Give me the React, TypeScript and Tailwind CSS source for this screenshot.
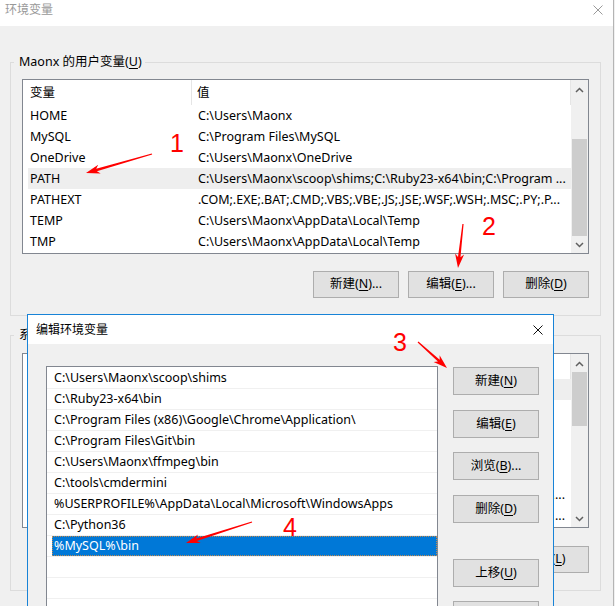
import React from "react";

const ff = "font-['Noto_Sans','Noto_Sans_CJK_SC',sans-serif]";

function Chevron({ up }: { up?: boolean }) {
  return (
    <svg width="9" height="6" viewBox="0 0 9 6">
      <polyline
        points={up ? "1,5 4.5,1.5 8,5" : "1,1 4.5,4.5 8,1"}
        fill="none"
        stroke="#606060"
        strokeWidth="1.5"
      />
    </svg>
  );
}

function ScrollBar({ trackClass, thumbClass }: { trackClass: string; thumbClass: string }) {
  return (
    <div className="w-[17px] h-full bg-[#f0f0f0] flex flex-col shrink-0">
      <div className="h-[17px] flex items-center justify-center pt-[2px]">
        <Chevron up />
      </div>
      <div className={`flex-1 flex flex-col px-[1px] ${trackClass}`}>
        <div className={`w-full bg-[#cdcdcd] ${thumbClass}`} />
      </div>
      <div className="h-[17px] flex items-center justify-center">
        <Chevron />
      </div>
    </div>
  );
}

function Button({ t, k, s = "", cls = "" }: { t: string; k: string; s?: string; cls?: string }) {
  return (
    <div
      className={`w-[86px] flex items-center justify-center bg-[#e1e1e1] border border-[#adadad] text-[12.5px] text-black leading-none ${cls}`}
    >
      <span>
        {t}(<span className="underline underline-offset-[2px]">{k}</span>){s}
      </span>
    </div>
  );
}

type Row = { n: string; v: string };

const userRows: Row[] = [
  { n: "HOME", v: "C:\\Users\\Maonx" },
  { n: "MySQL", v: "C:\\Program Files\\MySQL" },
  { n: "OneDrive", v: "C:\\Users\\Maonx\\OneDrive" },
  { n: "PATH", v: "C:\\Users\\Maonx\\scoop\\shims;C:\\Ruby23-x64\\bin;C:\\Program ..." },
  { n: "PATHEXT", v: ".COM;.EXE;.BAT;.CMD;.VBS;.VBE;.JS;.JSE;.WSF;.WSH;.MSC;.PY;.P..." },
  { n: "TEMP", v: "C:\\Users\\Maonx\\AppData\\Local\\Temp" },
  { n: "TMP", v: "C:\\Users\\Maonx\\AppData\\Local\\Temp" },
];

const sysRows: Row[] = [
  { n: "ComSpec", v: "C:\\WINDOWS\\system32\\cmd.exe" },
  { n: "DriverData", v: "C:\\Windows\\System32\\Drivers\\DriverData" },
  { n: "NUMBER_OF_PROCESSORS", v: "4" },
  { n: "OS", v: "Windows_NT" },
  { n: "ProgramData", v: "C:\\ProgramData" },
  { n: "Path", v: "C:\\ProgramData\\Oracle\\Java\\javapath;C:\\WINDOWS\\system32;C:\\..." },
  { n: "PATHEXT", v: ".COM;.EXE;.BAT;.CMD;.VBS;.VBE;.JS;.JSE;.WSF;.WSH;.MSC;.PY..." },
];

function VarList({
  rows,
  hi,
  trackClass,
  thumbClass,
  longEnd,
}: {
  rows: Row[];
  hi: number;
  trackClass: string;
  thumbClass: string;
  longEnd?: boolean;
}) {
  return (
    <div className="w-full h-[175px] border border-[#828790] bg-white flex">
      <div className="flex-1 flex flex-col min-w-0">
        <div className="h-[25px] flex items-center text-[12.5px] shrink-0">
          <div className="w-[169px] h-full flex items-center pl-[7px] pt-[1px] border-r border-[#e5e5e5]">变量</div>
          <div className="flex-1 h-full flex items-center pl-[5px] pt-[1px] border-r border-[#e5e5e5]">值</div>
        </div>
        <div className="pl-[5px] flex flex-col">
          {rows.map((r, i) => (
            <div
              key={r.n}
              className={`h-[21px] flex items-center pt-[2px] text-[12.5px] whitespace-nowrap ${
                i === hi ? "bg-[#eeeeee]" : ""
              }`}
            >
              <div className="w-[170px] pl-[2px] shrink-0 overflow-hidden">{r.n}</div>
              {longEnd && r.v.endsWith("...") ? (
                <div className="flex-1 flex min-w-0 pr-[6px]">
                  <span className="flex-1 overflow-hidden">{r.v.slice(0, -3)}</span>
                  <span>...</span>
                </div>
              ) : (
                <div className="flex-1 overflow-hidden">{r.v}</div>
              )}
            </div>
          ))}
        </div>
      </div>
      <ScrollBar trackClass={trackClass} thumbClass={thumbClass} />
    </div>
  );
}

function Group({
  label,
  k,
  cls,
  children,
}: {
  label: string;
  k: string;
  cls: string;
  children: React.ReactNode;
}) {
  return (
    <div className={`border border-[#dcdcdc] px-[11px] pb-[17px] ${cls}`}>
      <div className="block w-fit -mt-[9px] -ml-[8px] pl-[5px] pr-[3px] bg-[#f0f0f0] leading-[16px] text-[12.5px]">
        {label}(<span className="underline underline-offset-[2px]">{k}</span>)
      </div>
      {children}
    </div>
  );
}

function arrowPts(x1: number, y1: number, x2: number, y2: number) {
  const dx = x2 - x1,
    dy = y2 - y1,
    L = Math.hypot(dx, dy);
  const ux = dx / L,
    uy = dy / L,
    px = -uy,
    py = ux;
  const hl = 14,
    hw = 4.5,
    nw = 1.3,
    tw = 0.6,
    notch = 3;
  const bx = x2 - ux * hl,
    by = y2 - uy * hl;
  const nx = x2 - ux * (hl - notch),
    ny = y2 - uy * (hl - notch);
  const pts = [
    [x1 + px * tw, y1 + py * tw],
    [nx + px * nw, ny + py * nw],
    [bx + px * hw, by + py * hw],
    [x2, y2],
    [bx - px * hw, by - py * hw],
    [nx - px * nw, ny - py * nw],
    [x1 - px * tw, y1 - py * tw],
  ];
  return pts.map((p) => p.map((v) => v.toFixed(1)).join(",")).join(" ");
}

const pathItems = [
  "C:\\Users\\Maonx\\scoop\\shims",
  "C:\\Ruby23-x64\\bin",
  "C:\\Program Files (x86)\\Google\\Chrome\\Application\\",
  "C:\\Program Files\\Git\\bin",
  "C:\\Users\\Maonx\\ffmpeg\\bin",
  "C:\\tools\\cmdermini",
  "%USERPROFILE%\\AppData\\Local\\Microsoft\\WindowsApps",
  "C:\\Python36",
  "%MySQL%\\bin",
  "",
  "",
  "",
];

export default function App() {
  return (
    <div className={`relative w-[615px] h-[606px] overflow-hidden bg-[#f0f0f0] text-black ${ff}`}>
      {/* Outer window */}
      <div className="w-[614px] h-full flex flex-col border-r border-[#b4b4b4]">
        <div className="h-[26px] bg-white flex items-start justify-between shrink-0">
          <div className="h-[20px] flex items-center pl-[5px] text-[12px] text-[#999999]">环境变量</div>
          <div className="h-[20px] flex items-center pr-[10px]">
            <svg width="10" height="10" viewBox="0 0 10 10">
              <path d="M0.5 0.5 L9.5 9.5 M9.5 0.5 L0.5 9.5" stroke="#9a9a9a" strokeWidth="1" />
            </svg>
          </div>
        </div>
        <div className="flex-1 pl-[10px] pr-[12px]">
          <Group label="Maonx 的用户变量" k="U" cls="mt-[36px]">
            <div className="mt-[9px]">
              <VarList
                rows={userRows}
                hi={3}
                trackClass="justify-end"
                thumbClass="h-[97px]"
              />
            </div>
            <div className="mt-[17px] flex justify-end gap-[9px]">
              <Button t="新建" k="N" s="..." cls="h-[27px]" />
              <Button t="编辑" k="E" s="..." cls="h-[27px]" />
              <Button t="删除" k="D" cls="h-[27px]" />
            </div>
          </Group>
          <Group label="系统变量" k="S" cls="mt-[19px]">
            <div className="mt-[10px]">
              <VarList
                rows={sysRows}
                hi={0}
                trackClass="justify-start"
                thumbClass="mt-[1px] h-[54px]"
                longEnd
              />
            </div>
            <div className="mt-[18px] flex justify-end gap-[9px]">
              <Button t="新建" k="W" s="..." cls="h-[27px]" />
              <Button t="编辑" k="I" s="..." cls="h-[27px]" />
              <Button t="删除" k="L" cls="h-[27px]" />
            </div>
          </Group>
        </div>
      </div>

      {/* Inner dialog */}
      <div className="absolute left-[27px] top-[314px] w-[527px] h-[310px] border border-[#1883d7] bg-[#f0f0f0] flex flex-col">
        <div className="h-[29px] bg-white flex items-center justify-between pl-[8px] pr-[10px] shrink-0">
          <span className="text-[12px]">编辑环境变量</span>
          <svg width="10" height="10" viewBox="0 0 10 10">
            <path d="M0.5 0.5 L9.5 9.5 M9.5 0.5 L0.5 9.5" stroke="#111111" strokeWidth="1" />
          </svg>
        </div>
        <div className="flex pl-[18px] pt-[22px] gap-[15px]">
          <div className="w-[392px] h-[300px] border border-[#828790] bg-white pt-[1px] flex flex-col shrink-0">
            {pathItems.map((p, i) => (
              <div key={i} className="h-[21px] border-b border-[#f0f0f0] pl-[5px] shrink-0">
                <div
                  className={`h-[20px] flex items-center pl-[2px] pt-[1px] text-[12.5px] whitespace-nowrap ${
                    i === 8
                      ? "bg-[#0078d7] text-white outline outline-1 outline-dotted outline-[#c08a50] -outline-offset-1"
                      : ""
                  }`}
                >
                  {p}
                </div>
              </div>
            ))}
          </div>
          <div className="flex flex-col pt-[1px]">
            <Button t="新建" k="N" cls="h-[28px]" />
            <Button t="编辑" k="E" cls="h-[28px] mt-[15px]" />
            <Button t="浏览" k="B" s="..." cls="h-[28px] mt-[14px]" />
            <Button t="删除" k="D" cls="h-[28px] mt-[15px]" />
            <Button t="上移" k="U" cls="h-[28px] mt-[36px]" />
            <Button t="下移" k="O" cls="h-[28px] mt-[14px]" />
          </div>
        </div>
      </div>

      {/* Annotations */}
      <svg className="absolute left-0 top-0 pointer-events-none" width="615" height="606">
        <polygon points={arrowPts(152, 154, 86, 173)} fill="#ff0000" />
        <polygon points={arrowPts(463, 224, 458, 268)} fill="#ff0000" />
        <polygon points={arrowPts(418, 342, 447, 368)} fill="#ff0000" />
        <polygon points={arrowPts(252, 522, 186, 543)} fill="#ff0000" />
      </svg>
      <div className="absolute left-[170px] top-[131px] text-[25px] leading-none text-[#ff0000] font-['Liberation_Sans',sans-serif]">1</div>
      <div className="absolute left-[482px] top-[214px] text-[25px] leading-none text-[#ff0000] font-['Liberation_Sans',sans-serif]">2</div>
      <div className="absolute left-[393px] top-[330px] text-[25px] leading-none text-[#ff0000] font-['Liberation_Sans',sans-serif]">3</div>
      <div className="absolute left-[283px] top-[515px] text-[25px] leading-none text-[#ff0000] font-['Liberation_Sans',sans-serif]">4</div>
    </div>
  );
}
